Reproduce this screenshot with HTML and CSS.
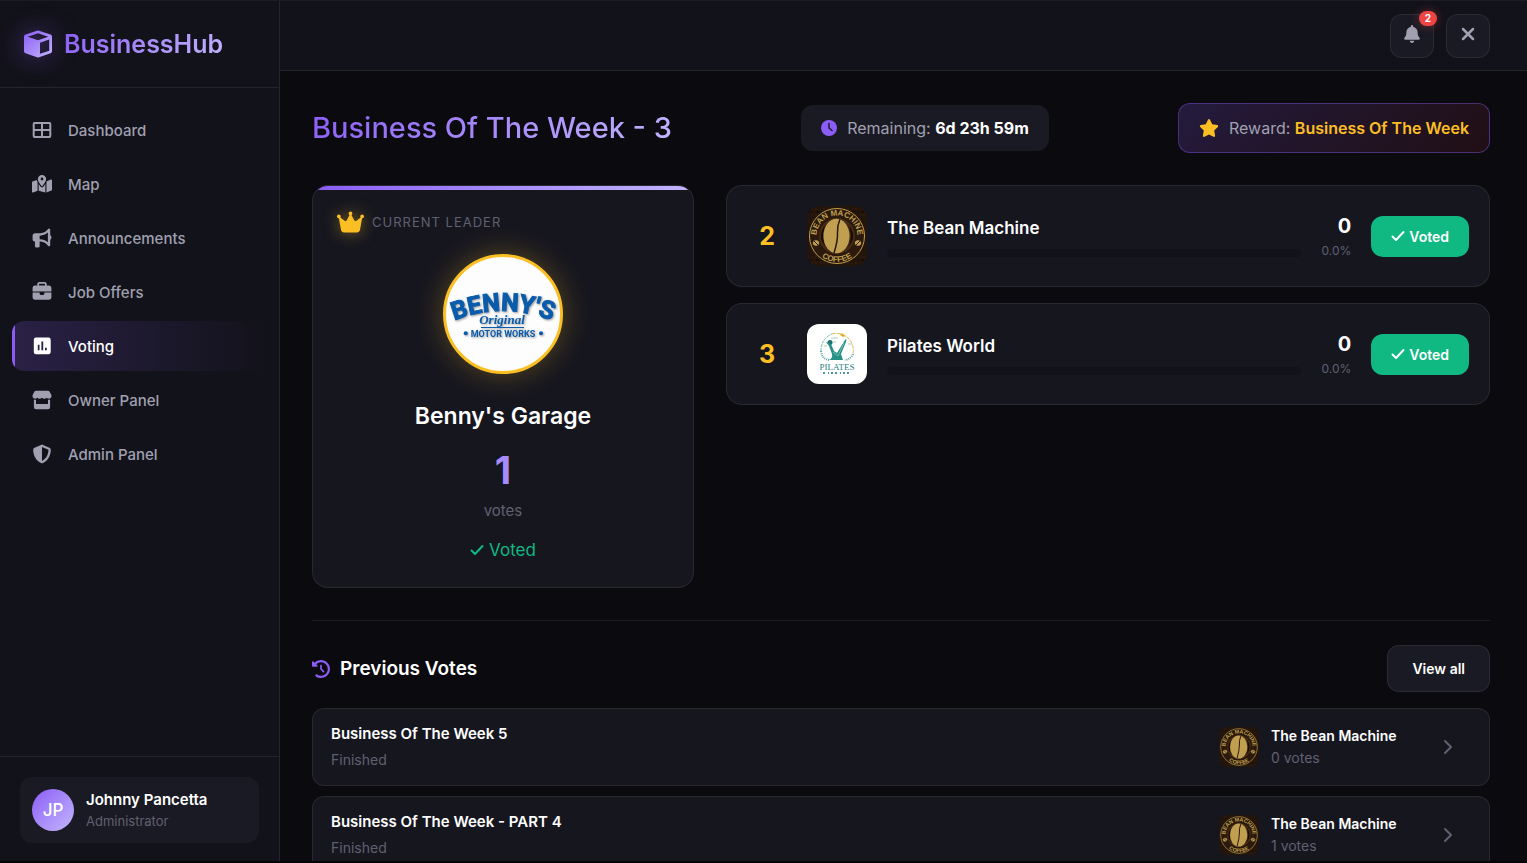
FILE: index.html
```html
<!DOCTYPE html>
<html lang="en">
<head>
<meta charset="UTF-8">
<meta name="viewport" content="width=device-width, initial-scale=1.0">
<title>BusinessHub - Voting</title>
<link rel="stylesheet" href="styles.css">
</head>
<body>
<!-- Shared icons -->
<svg class="sprite" aria-hidden="true">
    <defs>
        <linearGradient id="brandGradient" x1="0" y1="0" x2="1" y2="1">
            <stop offset="0" stop-color="#8b5cf6"/>
            <stop offset="1" stop-color="#c4b5fd"/>
        </linearGradient>
        <path id="beanTop" d="M9.5 30 A20.5 20.5 0 0 1 50.5 30"/>
        <path id="beanBottom" d="M4 30 A26 26 0 0 0 56 30"/>
    </defs>
    <symbol id="icon-check" viewBox="0 0 14 12">
        <path d="M1.5 6.5 L5 10 L12.5 2" fill="none" stroke="currentColor" stroke-width="2" stroke-linecap="round" stroke-linejoin="round"/>
    </symbol>
    <symbol id="icon-chevron" viewBox="0 0 10 16">
        <path d="M2 2 L8 8 L2 14" fill="none" stroke="currentColor" stroke-width="2" stroke-linecap="round" stroke-linejoin="round"/>
    </symbol>
    <symbol id="logo-bean" viewBox="0 0 60 60">
        <rect width="60" height="60" fill="#23150b"/>
        <path d="M0 3H60M0 9H60M0 51H60M0 57H60" stroke="#382312" stroke-width="1" stroke-dasharray="2 3 1 2"/>
        <path d="M0 6H60M0 54H60" stroke="#120b05" stroke-width="1" stroke-dasharray="3 2 1 3"/>
        <circle cx="30" cy="30" r="27.5" fill="#2a190c" stroke="#c0a050" stroke-width="1"/>
        <circle cx="30" cy="30" r="18" fill="#442a14"/>
        <ellipse cx="30" cy="30" rx="16" ry="15" fill="#120b05"/>
        <ellipse cx="30" cy="30" rx="14" ry="18" fill="#442a14"/>
        <ellipse cx="29.5" cy="30" rx="13" ry="17.3" fill="#c0a050"/>
        <path d="M33 13 Q30 20 30.5 27 Q31 34 27 47" fill="none" stroke="#2a190c" stroke-width="1.5"/>
        <g fill="#c0a050" stroke="#c0a050">
            <ellipse cx="9" cy="37" rx="2.8" ry="2.3"/>
            <ellipse cx="51" cy="37" rx="2.8" ry="2.3"/>
        </g>
        <path d="M7 35 L11 39 M49 39 L53 35" stroke="#2a190c"/>
        <text class="bean-text"><textPath href="#beanTop" startOffset="50%" text-anchor="middle">BEAN MACHINE</textPath></text>
        <text class="bean-text"><textPath href="#beanBottom" startOffset="50%" text-anchor="middle">COFFEE</textPath></text>
    </symbol>
</svg>

<div class="app">
    <!-- Sidebar -->
    <aside class="sidebar">
        <div class="brand">
            <svg class="brand-icon" viewBox="0 0 28 28" fill="url(#brandGradient)">
                <path fill-rule="evenodd" d="M13 .7 Q14 .3 15 .7 L26.5 4.5 Q28 5 28 6.5 V21.5 Q28 22.8 26.5 23.3 L15 27.2 Q14 27.6 13 27.2 L1.5 23.3 Q0 22.8 0 21.5 V6.5 Q0 5 1.500 4.5 Z M14 3.2 L3.8 6.7 L14 10.3 L24.2 6.7 Z M16 12.8 V23.8 L25.2 20.7 V9.5 Z"/>
            </svg>
            <span class="brand-name">BusinessHub</span>
        </div>

        <nav class="nav">
            <a class="nav-item" href="#dashboard">
                <svg viewBox="0 0 20 20"><path d="M2.5 3 H17.5 Q18.3 3 18.3 4 V16 Q18.3 17 17.5 17 H2.5 Q1.7 17 1.7 16 V4 Q1.7 3 2.5 3 Z M2 10 H18 M10 3 V17" fill="none" stroke="currentColor" stroke-width="2"/></svg>
                <span>Dashboard</span>
            </a>
            <a class="nav-item" href="#map">
                <svg viewBox="0 0 576 512"><path fill="currentColor" d="M408 120c0 54.600-73.100 151.900-105.200 192c-7.700 9.600-22 9.600-29.600 0C241.100 271.900 168 174.600 168 120C168 53.700 221.700 0 288 0s120 53.700 120 120zm8 80.400c3.500-6.900 6.700-13.800 9.600-20.600c.5-1.200 1-2.500 1.500-3.700l116-46.400C558.900 123.400 576 135 576 152V422.800c0 9.800-6 18.600-15.100 22.300L416 503V200.400zM137.600 138.300c2.400 14.100 7.200 28.300 12.800 41.500c2.900 6.800 6.100 13.700 9.600 20.600V451.800L32.900 502.700C17.100 509 0 497.400 0 480.400V209.600c0-9.800 6-18.600 15.100-22.300l122.600-49zM327.800 332c13.900-17.400 35.700-45.700 56.200-77V504.300L192 449.400V255c20.500 31.300 42.300 59.600 56.200 77c20.500 25.600 59.100 25.600 79.600 0zM288 152a40 40 0 1 0 0-80 40 40 0 1 0 0 80z"/></svg>
                <span>Map</span>
            </a>
            <a class="nav-item" href="#announcements">
                <svg viewBox="-16 -16 544 544"><path fill="currentColor" d="M480 32c0-12.900-7.800-24.600-19.800-29.600s-25.700-2.200-34.900 6.900L381.700 53c-48 48-113.100 75-181 75H192 160 64c-35.300 0-64 28.700-64 64v96c0 35.300 28.700 64 64 64l0 128c0 17.700 14.300 32 32 32h64c17.700 0 32-14.300 32-32V352l8.700 0c67.900 0 133 27 181 75l43.600 43.600c9.200 9.200 22.900 11.900 34.900 6.900s19.800-16.600 19.800-29.600V300.400c18.600-8.800 32-32.500 32-60.400s-13.400-51.600-32-60.400V32zm-64 76.700V240 371.300C357.200 317.800 280.500 288 200.700 288H192V192h8.700c79.800 0 156.500-29.800 215.300-83.300z"/></svg>
                <span>Announcements</span>
            </a>
            <a class="nav-item" href="#jobs">
                <svg viewBox="-16 0 544 544"><path fill="currentColor" d="M184 48H328c4.400 0 8 3.600 8 8V96H176V56c0-4.400 3.600-8 8-8zm-56 8V96H64C28.700 96 0 124.700 0 160v96H192 320 512V160c0-35.300-28.700-64-64-64H384V56c0-30.900-25.100-56-56-56H184c-30.900 0-56 25.100-56 56zM512 288H320v32c0 17.700-14.300 32-32 32H224c-17.700 0-32-14.300-32-32V288H0V416c0 35.300 28.700 64 64 64H448c35.300 0 64-28.700 64-64V288z"/></svg>
                <span>Job Offers</span>
            </a>
            <a class="nav-item active" href="#voting" aria-current="page">
                <svg viewBox="0 0 20 20"><path fill="currentColor" fill-rule="evenodd" d="M4 1.5 H16.5 Q18.7 1.5 18.7 3.7 V16 Q18.7 18.2 16.5 18.2 H4 Q1.8 18.2 1.8 16 V3.7 Q1.8 1.5 4 1.5 Z M5.8 8.8 V14.2 H7.5 V8.8 Z M9.4 5.5 V14.2 H11.2 V5.5 Z M13 11.8 V14.2 H14.8 V11.8 Z"/></svg>
                <span>Voting</span>
            </a>
            <a class="nav-item" href="#owner">
                <svg viewBox="0 0 20 20"><path fill="currentColor" fill-rule="evenodd" d="M4 .7 H16 Q17 .7 17.5 1.5 L19.4 5 Q20 8.3 17 8.7 Q15.5 8.7 14.7 7.8 Q13.5 9 12.3 8.7 Q10.8 8.7 10 7.8 Q9 8.7 7.7 8.7 Q6.2 8.7 5.3 7.8 Q4.3 8.7 3 8.7 Q0 8.3 .6 5 L2.5 1.5 Q3 .7 4 .7 Z M1.9 9.6 Q3 10 4 9.7 V14 H16 V9.7 Q17 10 18.1 9.6 V17 Q18.1 19.3 16 19.3 H4 Q1.9 19.3 1.9 17 Z"/></svg>
                <span>Owner Panel</span>
            </a>
            <a class="nav-item" href="#admin">
                <svg viewBox="-16 -16 544 544"><path fill="currentColor" d="M256 0c4.600 0 9.200 1 13.400 2.900L457.700 82.800c22 9.300 38.400 31 38.300 57.200c-.5 99.200-41.300 280.700-213.600 363.200c-16.700 8-36.100 8-52.800 0C57.300 420.700 16.500 239.200 16 140c-.1-26.200 16.300-47.900 38.300-57.200L242.700 2.900C246.800 1 251.400 0 256 0zm0 66.800V444.800C394 378 431.100 230.100 432 141.400L256 66.800z"/></svg>
                <span>Admin Panel</span>
            </a>
        </nav>

        <div class="sidebar-footer">
            <div class="user">
                <div class="user-avatar">JP</div>
                <div>
                    <div class="user-name">Johnny Pancetta</div>
                    <div class="user-role">Administrator</div>
                </div>
            </div>
        </div>
    </aside>

    <main class="main">
        <header class="topbar">
            <button class="icon-btn" aria-label="Notifications">
                <svg class="bell" viewBox="0 0 448 512"><path fill="currentColor" d="M224 0c-17.700 0-32 14.300-32 32V51.200C119 66 64 130.600 64 208v18.800c0 47-17.300 92.400-48.500 127.600l-7.400 8.300c-8.400 9.400-10.400 22.900-5.300 34.400S19.400 416 32 416H416c12.600 0 24-7.400 29.200-18.900s3.100-25-5.300-34.400l-7.400-8.300C401.300 319.200 384 273.900 384 226.800V208c0-77.400-55-142-128-156.800V32c0-17.700-14.300-32-32-32zm45.300 493.300c12-12 18.700-28.300 18.700-45.300H224 160c0 17 6.700 33.300 18.700 45.300s28.300 18.700 45.300 18.700s33.300-6.700 45.300-18.700z"/></svg>
                <span class="badge">2</span>
            </button>
            <button class="icon-btn" aria-label="Close">
                <svg class="close" viewBox="0 0 14 14"><path d="M2 2 L12 12 M12 2 L2 12" fill="none" stroke="currentColor" stroke-width="2.5" stroke-linecap="round"/></svg>
            </button>
        </header>

        <div class="content">
            <div class="page-head">
                <h1>Business Of The Week - 3</h1>
                <div class="pill">
                    <svg class="clock" viewBox="0 0 16 16"><circle cx="8" cy="8" r="8" fill="currentColor"/><path d="M8 3.5 V8 L11 10.5" fill="none" stroke="#1a1a24" stroke-width="1.5" stroke-linecap="round"/></svg>
                    <span>Remaining: <strong>6d 23h 59m</strong></span>
                </div>
                <div class="pill reward">
                    <svg class="star" viewBox="0 0 576 512"><path fill="currentColor" d="M316.900 18C311.600 7 300.400 0 288.100 0s-23.400 7-28.800 18L195 150.300 51.400 171.500c-12 1.800-22 10.200-25.700 21.700s-.7 24.200 7.900 32.700L137.800 329 113.200 474.700c-2 12 3 24.200 12.900 31.300s23 8 33.800 2.300l128.300-68.500 128.300 68.500c10.800 5.700 23.900 4.900 33.800-2.300s14.900-19.300 12.900-31.300L438.500 329 542.700 225.900c8.600-8.500 11.700-21.200 7.900-32.700s-13.700-19.900-25.700-21.700L381.200 150.300 316.900 18z"/></svg>
                    <span>Reward: <strong>Business Of The Week</strong></span>
                </div>
            </div>

            <!-- Current vote -->
            <div class="vote-grid">
                <section class="leader">
                    <div class="leader-label">
                        <svg class="crown" viewBox="0 0 576 512"><path fill="currentColor" d="M309 106c11.400-7 19-19.700 19-34c0-22.100-17.900-40-40-40s-40 17.900-40 40c0 14.400 7.600 27 19 34L209.700 220.600c-9.100 18.200-32.700 23.400-48.600 10.700L72 160c5-6.700 8-15 8-24c0-22.100-17.900-40-40-40S0 113.900 0 136s17.900 40 40 40c.2 0 .5 0 .7 0L86.400 427.400c5.500 30.400 32 52.600 63 52.600H426.600c30.900 0 57.400-22.100 63-52.600L535.300 176c.2 0 .5 0 .7 0c22.100 0 40-17.900 40-40s-17.900-40-40-40s-40 17.900-40 40c0 9 3 17.300 8 24l-89.100 71.300c-15.900 12.700-39.500 7.500-48.600-10.700L309 106z"/></svg>
                        <span>CURRENT LEADER</span>
                    </div>
                    <svg class="leader-logo" viewBox="0 0 114 114" role="img" aria-label="Benny's Original Motor Works">
                        <path id="bennyArc" d="M0 67 Q57 41 114 67" fill="none"/>
                        <g class="benny">
                            <text class="benny-main"><textPath href="#bennyArc" startOffset="50%" text-anchor="middle">BENNY'S</textPath></text>
                            <text class="benny-script" x="56" y="67" text-anchor="middle">Original</text>
                            <rect x="35" y="70" width="43" height="1"/>
                            <text class="benny-sub" x="57" y="80" text-anchor="middle">MOTOR WORKS</text>
                            <circle cx="19.7" cy="76.3" r="2"/>
                            <circle cx="95" cy="76.3" r="2"/>
                        </g>
                    </svg>
                    <h2>Benny's Garage</h2>
                    <div class="leader-count">1</div>
                    <div class="leader-unit">votes</div>
                    <div class="leader-voted"><svg class="check" viewBox="0 0 14 12"><use href="#icon-check"/></svg> Voted</div>
                </section>

                <div class="entries">
                    <article class="entry">
                        <div class="rank">2</div>
                        <svg class="entry-logo" viewBox="0 0 60 60"><use href="#logo-bean"/></svg>
                        <div class="entry-info">
                            <h3>The Bean Machine</h3>
                            <div class="bar"></div>
                        </div>
                        <div class="entry-stats">
                            <div class="entry-votes">0</div>
                            <div class="entry-percent">0.0%</div>
                        </div>
                        <button class="voted-btn"><svg class="check" viewBox="0 0 14 12"><use href="#icon-check"/></svg> Voted</button>
                    </article>
                    <article class="entry">
                        <div class="rank">3</div>
                        <svg class="entry-logo" viewBox="0 0 60 60">
                            <rect width="60" height="60" fill="#ffffff"/>
                            <path d="M14 27 A17 17 0 0 1 25 10" fill="none" stroke="#6fb9a0" stroke-width="1" stroke-dasharray="3 1"/>
                            <path d="M25 10 A17 17 0 0 1 46 30" fill="none" stroke="#d9bb55" stroke-width="1" stroke-dasharray="4 1"/>
                            <path d="M14 27 Q15 35 22 36 M46 30 Q44 35 38 36" fill="none" stroke="#5aa99b" stroke-width="2" stroke-dasharray="1 1"/>
                            <path d="M35 9 L37 11 L39 12 L36 13 L33 11 Z" fill="#e5ad2c"/>
                            <path d="M24 14 H31 M41 20 H45 M26 18 H29 M17 22 H20" stroke="#a9d3bd" stroke-width="1"/>
                            <circle cx="23" cy="18.5" r="2.5" fill="#1c6f73"/>
                            <path d="M19 18 L24 20 L27 27 L30 29 L38 16 L39.5 15 L39 18 L34 30 L36 36 H22 Q26 34 25 30 L22 22 Z" fill="#279187"/>
                            <path d="M26 28 L31 32 L37 19" fill="none" stroke="#74c2a9" stroke-width="1"/>
                            <text class="pilates-text" x="30" y="46" text-anchor="middle">PILATES</text>
                            <path d="M16 49 H44" stroke="#4a9a9c" stroke-width="2" stroke-dasharray="2 3 1 2 2 2"/>
                        </svg>
                        <div class="entry-info">
                            <h3>Pilates World</h3>
                            <div class="bar"></div>
                        </div>
                        <div class="entry-stats">
                            <div class="entry-votes">0</div>
                            <div class="entry-percent">0.0%</div>
                        </div>
                        <button class="voted-btn"><svg class="check" viewBox="0 0 14 12"><use href="#icon-check"/></svg> Voted</button>
                    </article>
                </div>
            </div>

            <!-- Previous votes -->
            <section class="history">
                <div class="history-head">
                    <h2>
                        <svg viewBox="0 0 512 512"><path fill="currentColor" d="M75 75L41 41C25.900 25.900 0 36.600 0 57.900V168c0 13.300 10.700 24 24 24H134.100c21.400 0 32.100-25.900 17-41l-30.800-30.800C155 85.500 203 64 256 64c106 0 192 86 192 192s-86 192-192 192c-40.800 0-78.600-12.700-109.700-34.400c-14.500-10.100-34.400-6.600-44.600 7.900s-6.600 34.400 7.900 44.600C151.200 495 201.700 512 256 512c141.400 0 256-114.600 256-256S397.400 0 256 0C185.300 0 121.300 28.700 75 75zm181 53c-13.300 0-24 10.700-24 24V256c0 6.400 2.500 12.500 7 17l72 72c9.400 9.400 24.600 9.400 33.900 0s9.400-24.600 0-33.900l-65-65V152c0-13.300-10.700-24-24-24z"/></svg>
                        Previous Votes
                    </h2>
                    <button class="view-all">View all</button>
                </div>
                <div class="history-list">
                    <a class="history-item" href="#vote-5">
                        <div class="history-info">
                            <h3>Business Of The Week 5</h3>
                            <p>Finished</p>
                        </div>
                        <svg class="winner-logo" viewBox="0 0 60 60"><use href="#logo-bean"/></svg>
                        <div class="winner">
                            <div class="winner-name">The Bean Machine</div>
                            <div class="winner-votes">0 votes</div>
                        </div>
                        <svg class="chevron" viewBox="0 0 10 16"><use href="#icon-chevron"/></svg>
                    </a>
                    <a class="history-item" href="#vote-4">
                        <div class="history-info">
                            <h3>Business Of The Week - PART 4</h3>
                            <p>Finished</p>
                        </div>
                        <svg class="winner-logo" viewBox="0 0 60 60"><use href="#logo-bean"/></svg>
                        <div class="winner">
                            <div class="winner-name">The Bean Machine</div>
                            <div class="winner-votes">1 votes</div>
                        </div>
                        <svg class="chevron" viewBox="0 0 10 16"><use href="#icon-chevron"/></svg>
                    </a>
                </div>
            </section>
        </div>
    </main>
</div>
</body>
</html>
```
FILE: styles.css
```css
:root {
    --bg: #0a0a0f;
    --panel: #12121a;
    --card: #16161f;
    --raised: #1a1a24;
    --border: rgba(255, 255, 255, 0.08);
    --text: #ffffff;
    --muted: #a0a0b0;
    --dim: #606070;
    --purple: #8b5cf6;
    --gold: #fbbf24;
    --green: #10b981;
    --gradient: linear-gradient(135deg, #8b5cf6 0%, #a78bfa 50%, #c4b5fd 100%);
}

* {
    box-sizing: border-box;
    margin: 0;
    padding: 0;
}

body {
    font-family: 'Inter', sans-serif;
    font-size: 15px;
    background: var(--bg);
    color: var(--text);
    overflow: hidden;
}

button {
    font-family: inherit;
    cursor: pointer;
}

a {
    color: inherit;
    text-decoration: none;
}

.sprite {
    position: absolute;
    width: 0;
    height: 0;
}

.app {
    display: flex;
    height: 100vh;
    border-top: 1px solid #1c1c22;
    border-bottom: 2px solid #050508;
}

/* Sidebar */
.sidebar {
    width: 280px;
    flex-shrink: 0;
    display: flex;
    flex-direction: column;
    background: var(--panel);
    border-right: 1px solid var(--border);
}

.brand {
    display: flex;
    align-items: center;
    gap: 12px;
    height: 87px;
    padding: 0 24px;
    border-bottom: 1px solid var(--border);
}

.brand-icon {
    width: 28px;
    height: 28px;
    filter: drop-shadow(0 0 12px rgba(139, 92, 246, 0.5));
}

.brand-name {
    font-size: 25px;
    line-height: 36px;
    font-weight: 600;
    background: var(--gradient);
    background-clip: text;
    -webkit-background-clip: text;
    color: transparent;
}

.nav {
    flex: 1;
    display: flex;
    flex-direction: column;
    gap: 4px;
    padding: 17px 12px;
}

.nav-item {
    position: relative;
    display: flex;
    align-items: center;
    gap: 16px;
    height: 50px;
    padding: 0 20px;
    border-radius: 12px;
    color: var(--muted);
    font-weight: 500;
    overflow: hidden;
}

.nav-item svg {
    width: 20px;
    height: 20px;
}

.nav-item.active {
    background: linear-gradient(90deg, rgba(139, 92, 246, 0.2), transparent);
    color: var(--text);
}

.nav-item.active::before {
    content: '';
    position: absolute;
    top: 0;
    bottom: 0;
    left: 0;
    width: 3px;
    background: var(--purple);
}

.sidebar-footer {
    padding: 20px 20px 18px;
    border-top: 1px solid var(--border);
}

.user {
    display: flex;
    align-items: center;
    gap: 12px;
    padding: 12px;
    border-radius: 12px;
    background: var(--raised);
}

.user-avatar {
    display: flex;
    align-items: center;
    justify-content: center;
    width: 42px;
    height: 42px;
    border-radius: 50%;
    background: var(--gradient);
    font-size: 17px;
    font-weight: 500;
}

.user-name {
    font-size: 15px;
    line-height: 22px;
    font-weight: 600;
}

.user-role {
    color: var(--dim);
    font-size: 13px;
    line-height: 20px;
}

/* Top bar */
.main {
    flex: 1;
    min-width: 0;
    display: flex;
    flex-direction: column;
}

.topbar {
    display: flex;
    align-items: center;
    justify-content: flex-end;
    flex-shrink: 0;
    gap: 12px;
    height: 70px;
    padding: 0 37px 0 32px;
    background: var(--panel);
    border-bottom: 1px solid var(--border);
}

.icon-btn {
    position: relative;
    display: flex;
    align-items: center;
    justify-content: center;
    width: 44px;
    height: 44px;
    padding-bottom: 4px;
    border: 1px solid var(--border);
    border-radius: 12px;
    background: var(--raised);
    color: var(--muted);
}

.bell {
    width: 16px;
    height: 18px;
}

.close {
    width: 14px;
    height: 14px;
}

.badge {
    position: absolute;
    top: -4px;
    right: -4px;
    padding: 0 6px;
    border-radius: 10px;
    background: #ef4444;
    color: #ffffff;
    font-size: 10px;
    line-height: 15px;
    font-weight: 700;
    box-shadow: 0 0 10px rgba(239, 68, 68, 0.4);
}

/* Page */
.content {
    flex: 1;
    min-height: 0;
    padding: 32px 37px 32px 32px;
    overflow: hidden;
}

.page-head {
    display: flex;
    align-items: center;
    justify-content: space-between;
    margin-bottom: 32px;
}

h1 {
    font-size: 29px;
    line-height: 44px;
    font-weight: 500;
    background: var(--gradient);
    background-clip: text;
    -webkit-background-clip: text;
    color: transparent;
}

.pill {
    display: flex;
    align-items: center;
    gap: 10px;
    padding: 10px 20px;
    border-radius: 12px;
    background: var(--raised);
    color: var(--muted);
    font-size: 16px;
    line-height: 26px;
}

.pill strong {
    color: var(--text);
    font-weight: 700;
}

.reward {
    padding: 11px 20px;
    border: 1px solid rgba(139, 92, 246, 0.4);
    background: linear-gradient(135deg, rgba(139, 92, 246, 0.2), rgba(239, 68, 68, 0.1));
}

.reward strong {
    color: var(--gold);
    font-weight: 600;
}

.clock {
    width: 16px;
    height: 16px;
    color: var(--purple);
}

.star {
    width: 20px;
    height: 18px;
    color: var(--gold);
}

/* Current vote */
.vote-grid {
    display: grid;
    grid-template-columns: 1fr 2fr;
    gap: 32px;
    align-items: start;
    margin-bottom: 32px;
}

.leader {
    position: relative;
    display: flex;
    flex-direction: column;
    align-items: center;
    padding: 24px;
    border: 1px solid var(--border);
    border-radius: 16px;
    background: var(--card);
    text-align: center;
    overflow: hidden;
}

.leader::before {
    content: '';
    position: absolute;
    top: 0;
    left: 0;
    right: 0;
    height: 4px;
    background: var(--gradient);
}

.leader-label {
    display: flex;
    align-items: center;
    align-self: flex-start;
    gap: 8px;
    margin-bottom: 20px;
    color: var(--dim);
    font-size: 13px;
    line-height: 24px;
    letter-spacing: 1px;
}

.crown {
    width: 27px;
    height: 24px;
    color: var(--gold);
    filter: drop-shadow(0 0 8px rgba(251, 191, 36, 0.5));
}

.leader-logo {
    width: 120px;
    height: 120px;
    margin-bottom: 24px;
    border: 3px solid var(--gold);
    border-radius: 50%;
    background: #fdfdfd;
    box-shadow: 0 0 30px rgba(251, 191, 36, 0.3);
}

.benny {
    fill: #0a5cab;
    filter: drop-shadow(1px 1px 1px rgba(0, 0, 0, 0.4));
}

.benny-main {
    font-family: 'Roboto', sans-serif;
    font-size: 25px;
    font-weight: 700;
    stroke: #0a5cab;
    stroke-width: 1px;
}

.benny-script {
    font-family: 'Liberation Serif', serif;
    font-size: 13px;
    font-style: italic;
    font-weight: 700;
}

.benny-sub {
    font-family: 'Roboto', sans-serif;
    font-size: 9px;
    font-weight: 700;
}

.leader h2 {
    margin-bottom: 16px;
    font-size: 23px;
    line-height: 36px;
    font-weight: 600;
}

.leader-count {
    color: #a78bfa;
    font-size: 38px;
    line-height: 40px;
    font-weight: 700;
}

.leader-unit {
    margin: 10px 0 15px;
    color: var(--dim);
    font-size: 15px;
    line-height: 22px;
}

.leader-voted {
    display: flex;
    align-items: center;
    gap: 5px;
    color: var(--green);
    font-size: 17px;
    line-height: 26px;
}

.check {
    width: 14px;
    height: 12px;
}

.entries {
    display: flex;
    flex-direction: column;
    gap: 16px;
}

.entry {
    display: flex;
    align-items: center;
    gap: 20px;
    padding: 20px;
    border: 1px solid var(--border);
    border-radius: 16px;
    background: var(--card);
}

.rank {
    width: 40px;
    color: var(--gold);
    font-size: 25px;
    font-weight: 700;
    text-align: center;
}

.entry-logo {
    width: 60px;
    height: 60px;
    border-radius: 12px;
}

.bean-text {
    fill: #c0a050;
    font-family: 'Liberation Sans Narrow', 'Liberation Sans', sans-serif;
    font-size: 8px;
    font-weight: 700;
}

.pilates-text {
    fill: #1f7f86;
    font-family: 'Liberation Serif', serif;
    font-size: 9px;
}

.entry-info {
    flex: 1;
}

.entry-info h3 {
    margin-bottom: 8px;
    font-size: 17px;
    line-height: 26px;
    font-weight: 600;
}

.bar {
    height: 8px;
    border-radius: 4px;
    background: var(--panel);
}

.entry-stats {
    text-align: right;
}

.entry-votes {
    font-size: 20px;
    line-height: 30px;
    font-weight: 700;
}

.entry-percent {
    color: var(--dim);
    font-size: 12px;
    line-height: 20px;
}

.voted-btn {
    display: flex;
    align-items: center;
    gap: 4px;
    height: 41px;
    padding: 0 20px;
    border: none;
    border-radius: 12px;
    background: var(--green);
    color: #ffffff;
    font-size: 14px;
    font-weight: 600;
}

/* Previous votes */
.history {
    padding-top: 24px;
    border-top: 1px solid var(--border);
}

.history-head {
    display: flex;
    align-items: center;
    justify-content: space-between;
    margin-bottom: 16px;
}

.history-head h2 {
    display: flex;
    align-items: center;
    gap: 10px;
    font-size: 19px;
    font-weight: 600;
}

.history-head svg {
    width: 18px;
    height: 18px;
    color: var(--purple);
}

.view-all {
    height: 47px;
    padding: 0 24px;
    border: 1px solid var(--border);
    border-radius: 12px;
    background: var(--raised);
    color: var(--text);
    font-size: 14px;
    font-weight: 600;
}

.history-list {
    display: flex;
    flex-direction: column;
    gap: 10px;
}

.history-item {
    display: flex;
    align-items: center;
    height: 78px;
    padding: 0 18px;
    border: 1px solid var(--border);
    border-radius: 12px;
    background: var(--card);
}

.history-info {
    flex: 1;
}

.history-info h3 {
    font-size: 15px;
    line-height: 26px;
    font-weight: 600;
}

.history-info p {
    color: var(--dim);
    font-size: 14px;
    line-height: 26px;
}

.winner-logo {
    width: 40px;
    height: 40px;
    margin-right: 12px;
    border-radius: 8px;
}

.winner {
    min-width: 130px;
}

.winner-name {
    font-size: 14px;
    line-height: 22px;
    font-weight: 600;
}

.winner-votes {
    color: var(--dim);
    font-size: 14px;
    line-height: 22px;
}

.chevron {
    width: 10px;
    height: 16px;
    margin: 0 18px 0 42px;
    color: var(--dim);
}
```
